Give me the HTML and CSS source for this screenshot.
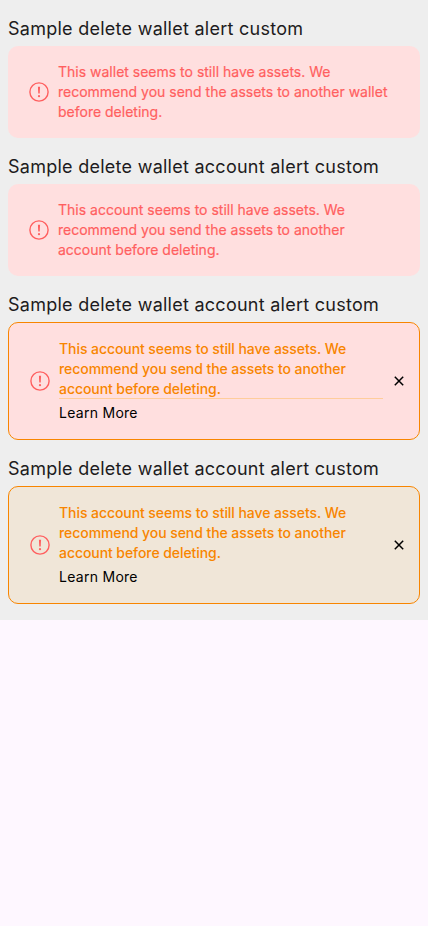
FILE: index.html
```html
<!DOCTYPE html>
<html lang="en">
<head>
<meta charset="utf-8">
<title>Wallet alerts</title>
<link rel="stylesheet" href="styles.css">
</head>
<body>
<svg width="0" height="0" class="defs">
  <symbol id="warn" viewBox="0 0 20 20"><circle cx="10" cy="10" r="9.1" fill="none" stroke="#ff5f5f" stroke-width="1.4"/><path d="M8.9 4.8h2.2l-.4 6.8H9.3z" fill="#ff5f5f"/><circle cx="10" cy="14.2" r="1.1" fill="#ff5f5f"/></symbol>
  <symbol id="close" viewBox="0 0 10 10"><path d="M.8 .8l8.4 8.4M9.2 .8L.8 9.2" stroke="#000" stroke-width="1.5"/></symbol>
</svg>
<main class="page">
  <h2>Sample delete wallet alert custom</h2>
  <section class="alert">
    <svg class="icon"><use href="#warn"/></svg>
    <p>This wallet seems to still have assets. We<br>recommend you send the assets to another wallet<br>before deleting.</p>
  </section>
  <h2>Sample delete wallet account alert custom</h2>
  <section class="alert">
    <svg class="icon"><use href="#warn"/></svg>
    <p>This account seems to still have assets. We<br>recommend you send the assets to another<br>account before deleting.</p>
  </section>
  <h2>Sample delete wallet account alert custom</h2>
  <section class="alert outlined">
    <svg class="icon"><use href="#warn"/></svg>
    <div class="body">
      <p class="ruled">This account seems to still have assets. We<br>recommend you send the assets to another<br>account before deleting.</p>
      <a class="more">Learn More</a>
    </div>
    <svg class="close"><use href="#close"/></svg>
  </section>
  <h2>Sample delete wallet account alert custom</h2>
  <section class="alert outlined tan">
    <svg class="icon"><use href="#warn"/></svg>
    <div class="body">
      <p>This account seems to still have assets. We<br>recommend you send the assets to another<br>account before deleting.</p>
      <a class="more">Learn More</a>
    </div>
    <svg class="close"><use href="#close"/></svg>
  </section>
</main>
</body>
</html>
```
FILE: styles.css
```css
* { box-sizing: border-box; }
body { margin: 0; background: #fef7ff; font-family: Inter, sans-serif; }
.defs { display: block; }
.page { height: 620px; padding: 16px 8px; background: #eee; }
h2 { margin: 0; height: 30px; padding-top: 1px; font-size: 18px; line-height: 24px; font-weight: 400; letter-spacing: .26px; color: #1d1b20; white-space: nowrap; }
.alert { display: flex; align-items: center; height: 92px; margin-bottom: 16px; padding: 0 20px; background: #ffdfdf; border-radius: 10px; color: #ff5f5f; }
.icon { width: 20px; height: 20px; margin: 0 9px 0 1px; flex: none; }
p { margin: 0; font-size: 14px; line-height: 20px; font-weight: 400; letter-spacing: 0; -webkit-text-stroke: .2px currentColor; white-space: nowrap; }
.outlined { height: 118px; border: 1px solid #f88500; color: #f88500; }
.outlined p { font-weight: 500; letter-spacing: -.07px; -webkit-text-stroke: 0; }
.body { width: 324px; flex: none; }
.ruled { box-shadow: inset 0 -1px #ffcd9b; height: 60px; }
.more { display: block; padding-top: 4px; font-size: 14px; line-height: 20px; letter-spacing: .28px; color: #000; }
.close { width: 10px; height: 10px; margin-left: 11px; flex: none; }
.tan { background: #f0e6d8; }
```
